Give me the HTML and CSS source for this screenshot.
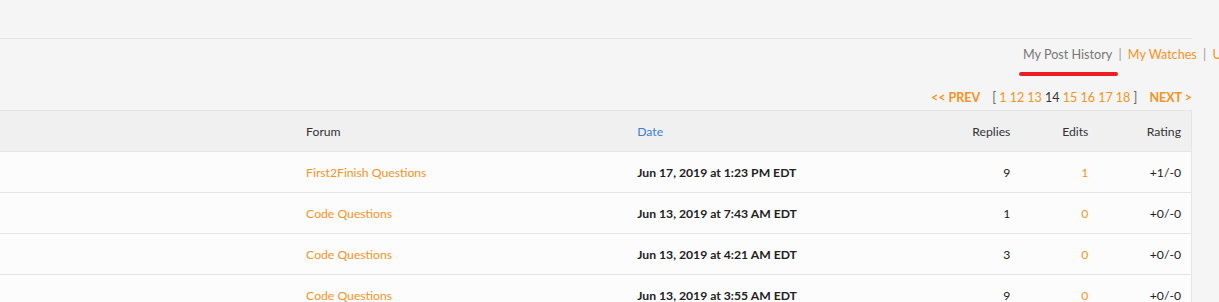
FILE: index.html
```html
<!DOCTYPE html>
<html lang="en">
<head>
    <meta charset="UTF-8">
    <title>My Post History</title>
    <link rel="stylesheet" href="styles.css">
</head>
<body>
    <div class="topbar"></div>
    <div class="nav">
        <a class="current" href="#">My Post History</a>
        <span class="sep">|</span>
        <a href="#">My Watches</a>
        <span class="sep">|</span>
        <a href="#">User Settings</a>
    </div>
    <div class="pager">
        <a class="step" href="#">&lt;&lt; PREV</a>
        <span class="pages">
            <span class="bracket">[</span>
            <a href="#">1</a>
            <a href="#">12</a>
            <a href="#">13</a>
            <span class="here">14</span>
            <a href="#">15</a>
            <a href="#">16</a>
            <a href="#">17</a>
            <a href="#">18</a>
            <span class="bracket">]</span>
        </span>
        <a class="step" href="#">NEXT &gt;</a>
    </div>
    <table class="posts">
        <colgroup>
            <col style="width:296px">
            <col style="width:331px">
            <col style="width:293px">
            <col style="width:100px">
            <col style="width:78px">
            <col style="width:93px">
        </colgroup>
        <thead>
            <tr>
                <th></th>
                <th>Forum</th>
                <th><a class="sort" href="#">Date</a></th>
                <th class="num">Replies</th>
                <th class="num">Edits</th>
                <th class="num">Rating</th>
            </tr>
        </thead>
        <tbody>
            <tr>
                <td></td>
                <td><a href="#">First2Finish Questions</a></td>
                <td class="date">Jun 17, 2019 at 1:23 PM EDT</td>
                <td class="num">9</td>
                <td class="num"><a href="#">1</a></td>
                <td class="num">+1/-0</td>
            </tr>
            <tr>
                <td></td>
                <td><a href="#">Code Questions</a></td>
                <td class="date">Jun 13, 2019 at 7:43 AM EDT</td>
                <td class="num">1</td>
                <td class="num"><a href="#">0</a></td>
                <td class="num">+0/-0</td>
            </tr>
            <tr>
                <td></td>
                <td><a href="#">Code Questions</a></td>
                <td class="date">Jun 13, 2019 at 4:21 AM EDT</td>
                <td class="num">3</td>
                <td class="num"><a href="#">0</a></td>
                <td class="num">+0/-0</td>
            </tr>
            <tr>
                <td></td>
                <td><a href="#">Code Questions</a></td>
                <td class="date">Jun 13, 2019 at 3:55 AM EDT</td>
                <td class="num">9</td>
                <td class="num"><a href="#">0</a></td>
                <td class="num">+0/-0</td>
            </tr>
        </tbody>
    </table>
</body>
</html>
```

FILE: styles.css
```css
body {
    margin: 0;
    background-color: #f5f5f5;
    font-family: Lato, "Liberation Sans", sans-serif;
    font-size: 12.2px;
    color: #222;
    overflow: hidden;
}
a {
    color: #f7931e;
    text-decoration: none;
}
.topbar {
    width: 1192px;
    height: 38px;
    border-bottom: 1px solid #e3e3e3;
}
.nav {
    padding: 6px 0 0 1023px;
    line-height: 20px;
    font-size: 12.6px;
    white-space: nowrap;
}
.nav .current {
    position: relative;
    color: #777;
}
.nav .current::after {
    content: "";
    position: absolute;
    left: -4px;
    right: -6px;
    top: 25px;
    height: 4px;
    border-radius: 2px;
    background-color: #ee1c25;
}
.sep {
    color: #999;
    margin: 0 3px;
}
.pager {
    width: 1192px;
    margin-top: 23px;
    line-height: 20px;
    font-size: 12.5px;
    display: flex;
    justify-content: flex-end;
    gap: 12px;
}
.pager .step {
    font-weight: bold;
}
.bracket {
    color: #666;
}
.here {
    color: #333;
}
.posts {
    margin-top: 2px;
    width: 1192px;
    table-layout: fixed;
    border-collapse: collapse;
    background-color: #fcfcfc;
    border-right: 1px solid #e5e5e5;
}
.posts th,
.posts td {
    height: 40px;
    padding: 0 10px;
    border-top: 1px solid #e5e5e5;
    border-bottom: 1px solid #e5e5e5;
    text-align: left;
    white-space: nowrap;
}
.posts th {
    background-color: #f0f0f0;
    font-weight: normal;
    color: #333;
}
.posts .num {
    text-align: right;
}
.posts .date {
    font-weight: bold;
}
.sort {
    color: #3b7dd8;
}
```
